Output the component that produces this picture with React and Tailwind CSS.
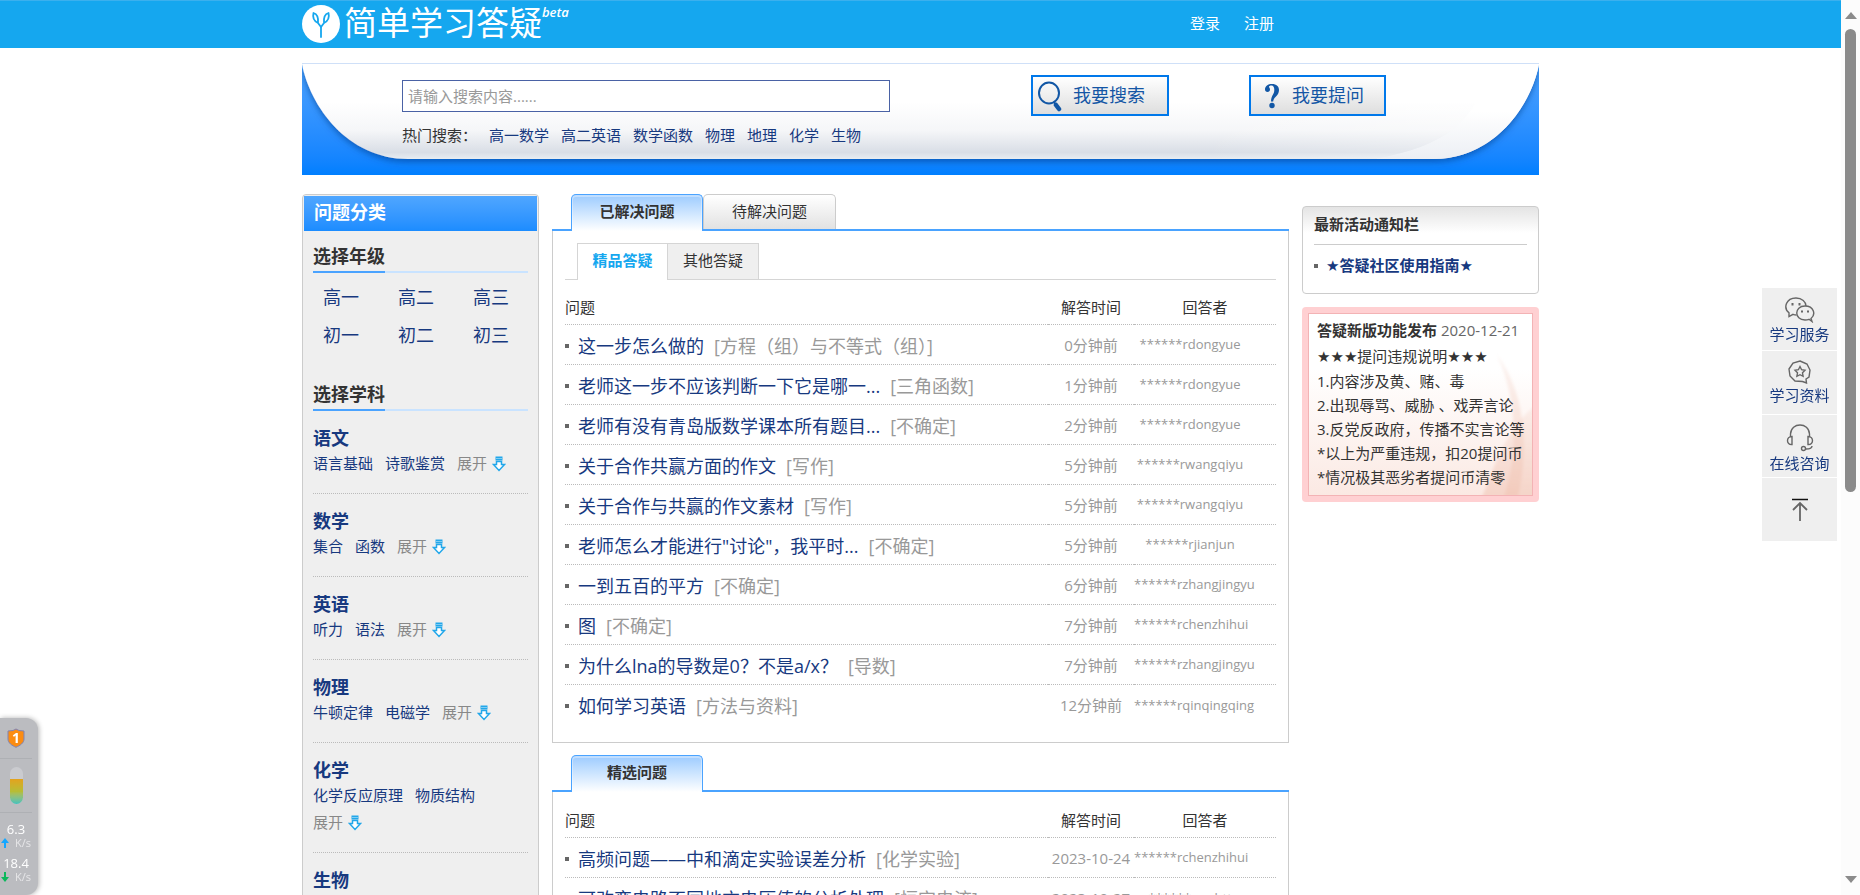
import React from "react";

const solved = [
  ["这一步怎么做的", "方程（组）与不等式（组）", "0分钟前", "******rdongyue"],
  ["老师这一步不应该判断一下它是哪一...", "三角函数", "1分钟前", "******rdongyue"],
  ["老师有没有青岛版数学课本所有题目...", "不确定", "2分钟前", "******rdongyue"],
  ["关于合作共赢方面的作文", "写作", "5分钟前", "******rwangqiyu"],
  ["关于合作与共赢的作文素材", "写作", "5分钟前", "******rwangqiyu"],
  ["老师怎么才能进行\"讨论\"，我平时...", "不确定", "5分钟前", "******rjianjun"],
  ["一到五百的平方", "不确定", "6分钟前", "******rzhangjingyu"],
  ["图", "不确定", "7分钟前", "******rchenzhihui"],
  ["为什么lna的导数是0？不是a/x？", "导数", "7分钟前", "******rzhangjingyu"],
  ["如何学习英语", "方法与资料", "12分钟前", "******rqinqingqing"],
];

const featured = [
  ["高频问题——中和滴定实验误差分析", "化学实验", "2023-10-24", "******rchenzhihui"],
  ["可改变电路不同地方电压值的分析处理", "恒定电流", "2023-10-27", "******rwuhtt"],
];

const subjects = [
  ["语文", ["语言基础", "诗歌鉴赏"]],
  ["数学", ["集合", "函数"]],
  ["英语", ["听力", "语法"]],
  ["物理", ["牛顿定律", "电磁学"]],
  ["化学", ["化学反应原理", "物质结构"]],
  ["生物", []],
];

function Logo() {
  return (
    <h1 className="flex items-start text-white">
      <svg viewBox="0 0 38 38" className="mt-1 size-[38px]" aria-hidden="true">
        <circle cx="19" cy="19" r="19" fill="#fff" />
        <g fill="none" stroke="#15a7ef" strokeWidth="1.8" strokeLinecap="round" strokeLinejoin="round">
          <path d="M19 32V22L16 18C12 16 10.500 12 11.500 8C15 9 16.500 13 16 18" />
          <path d="M19 22L22 18C21.500 13 23 9 26.500 8C27.500 12 26 16 22 18" />
        </g>
      </svg>
      <span className="ml-1 text-[33px] leading-[44px] font-normal">简单学习答疑</span>
      <i className="mt-[3px] text-[13px] leading-4 font-semibold">beta</i>
    </h1>
  );
}

function DownArrow() {
  return (
    <svg viewBox="0 0 14 16" className="ml-[5px] h-4 w-[14px]" aria-hidden="true">
      <path d="M3.500 0.500h7v4h-7z" fill="#22a7ea" />
      <path d="M4 2.500h6" stroke="#7fcdf3" />
      <path d="M4.500 5.500v3H1.500L7 14.500 12.500 8.500H9.500v-3z" fill="#fff" stroke="#22a7ea" strokeWidth="1.500" />
    </svg>
  );
}

function Stars({ children }) {
  return <span className="font-['DejaVu_Sans',sans-serif]">{children}</span>;
}

function SectionTitle({ children }) {
  return (
    <h3 className="flex border-b-2 border-[#c9e3ff]">
      <span className="-mb-0.5 border-b-2 border-[#4aa3ff] text-[18px] leading-[30px] font-bold">{children}</span>
    </h3>
  );
}

function Sidebar() {
  return (
    <aside className="w-[237px] shrink-0 rounded-t-sm border border-[#ccc] bg-[#efefef]">
      <h2 className="m-px h-[35px] bg-gradient-to-b from-[#4fa6ff] to-[#1b8cff] pl-[10px] text-[18px] leading-[32px] font-bold text-white">问题分类</h2>
      <div className="px-[10px] pt-[9px]">
        <SectionTitle>选择年级</SectionTitle>
        <ul className="-mr-[10px] flex flex-wrap pt-[5px] pb-[25px] text-[18px] leading-[38px] text-[#17397f]">
          {["高一", "高二", "高三", "初一", "初二", "初三"].map((g) => (
            <li key={g} className="w-[75px] pl-[10px]"><a href="#">{g}</a></li>
          ))}
        </ul>
        <SectionTitle>选择学科</SectionTitle>
        {subjects.map(([name, links]) => (
          <section key={name} className="mt-[15px] border-b border-dotted border-[#bbb] pb-4">
            <h4 className="text-[18px] leading-6 font-bold text-[#17397f]"><a href="#">{name}</a></h4>
            <div className="flex min-h-[27px] flex-wrap gap-x-3 text-[15px] leading-[27px] text-[#17397f]">
              {links.map((l) => <a key={l} href="#">{l}</a>)}
              {links.length > 0 && <button type="button" className="flex items-center text-[#888]">展开<DownArrow /></button>}
            </div>
          </section>
        ))}
      </div>
    </aside>
  );
}

function QuestionTable({ rows }) {
  return (
    <table className="w-full table-fixed border-collapse">
      <thead>
        <tr className="h-[33px] border-b border-dotted border-[#bbb] text-[15px]">
          <th className="text-left font-normal">问题</th>
          <th className="w-[86px] text-center font-normal">解答时间</th>
          <th className="w-[142px] text-center font-normal">回答者</th>
        </tr>
      </thead>
      <tbody>
        {rows.map(([q, tag, time, who], i) => (
          <tr key={q} className={i === rows.length - 1 ? "h-10" : "h-10 border-b border-dotted border-[#bbb]"}>
            <td className="pt-1 text-[18px]">
              <div className="flex items-center whitespace-nowrap">
                <span className="mr-[9px] size-1 bg-[#666]" />
                <a href="#" className="text-[#17397f]">{q}</a>
                <span className="ml-[10px] text-[#999]">[{tag}]</span>
              </div>
            </td>
            <td className="pt-0.5 text-center text-[15px] whitespace-nowrap text-[#999]">{time}</td>
            <td className="pt-0.5 text-left text-[13px] whitespace-nowrap text-[#999]">
              <span className="inline-block min-w-[112px] text-center">{who}</span>
            </td>
          </tr>
        ))}
      </tbody>
    </table>
  );
}

function ActiveTab({ children }) {
  return (
    <button type="button" className="-mb-0.5 h-[37px] w-[132px] rounded-t-[5px] border border-b-0 border-[#4aa3ff] bg-gradient-to-b from-[#9ccbff] to-white pb-1 text-[15px] font-bold shadow-[inset_0_1px_0_1px_rgba(255,255,255,0.35)]">{children}</button>
  );
}

function Main() {
  return (
    <main className="min-w-0 flex-1">
      <div className="flex border-b-2 border-[#4aa3ff] pl-[19px]">
        <ActiveTab>已解决问题</ActiveTab>
        <button type="button" className="h-[35px] w-[133px] rounded-t-[5px] border border-b-0 border-[#ccc] bg-gradient-to-b from-white to-[#e2e2e2] pb-0.5 text-[15px]">待解决问题</button>
      </div>
      <div className="border border-t-0 border-[#ccc] px-3 pt-3 pb-[18px]">
        <div className="flex border-b border-[#d5d5d5] pl-3 text-[15px]">
          <button type="button" className="-mb-px h-[37px] w-[90px] border border-r-0 border-b-0 border-[#d5d5d5] bg-white pb-[3px] font-bold text-[#15a7ef]">精品答疑</button>
          <button type="button" className="h-9 w-[92px] border border-b-0 border-[#d5d5d5] bg-[#efefef] pb-0.5">其他答疑</button>
        </div>
        <div className="pt-[11px]"><QuestionTable rows={solved} /></div>
      </div>
      <div className="mt-3 flex border-b-2 border-[#4aa3ff] pl-[19px]">
        <ActiveTab>精选问题</ActiveTab>
      </div>
      <div className="border border-t-0 border-[#ccc] px-3 pt-3">
        <QuestionTable rows={featured} />
      </div>
    </main>
  );
}

function Notices() {
  return (
    <aside className="mt-3 w-[237px] shrink-0">
      <section className="h-[88px] rounded border border-[#ccc] bg-gradient-to-b from-[#e4e4e4] to-white to-30% px-[11px] text-[15px]">
        <h2 className="border-b border-[#ccc] pb-0.5 leading-[35px] font-bold">最新活动通知栏</h2>
        <div className="flex items-center pt-2">
          <span className="mr-2 size-1 bg-[#666]" />
          <a href="#" className="leading-6 font-bold text-[#17397f]"><Stars>★</Stars>答疑社区使用指南<Stars>★</Stars></a>
        </div>
      </section>
      <section className="mt-[13px] rounded-sm bg-[#ffd0d2] p-[6px]">
        <div className="relative overflow-hidden border border-[#f3b3b5] bg-gradient-to-b from-white from-30% to-[#fbe9e3] pt-0.5 pr-0 pb-[6px] pl-2 text-[15px] leading-6 whitespace-nowrap">
          <svg viewBox="0 0 80 150" className="absolute right-0 bottom-0 h-[150px] w-20" aria-hidden="true">
            <defs>
              <linearGradient id="petal" x2="0" y2="1">
                <stop stopColor="#f2cfc2" stopOpacity=".25" />
                <stop offset="1" stopColor="#f0c3b2" stopOpacity=".55" />
              </linearGradient>
              <filter id="soft"><feGaussianBlur stdDeviation="1.500" /></filter>
            </defs>
            <g fill="url(#petal)" filter="url(#soft)">
              <path d="M45 10C72 45 78 100 66 152H52C66 110 66 55 45 10Z" />
              <path d="M84 60C52 85 44 120 30 152H84Z" />
            </g>
          </svg>
          <div className="relative">
            <h2 className="leading-[28px]"><b>答疑新版功能发布</b> <span className="text-[#666]">2020-12-21</span></h2>
            <p><Stars>★★★</Stars>提问违规说明<Stars>★★★</Stars></p>
            <p>1.内容涉及黄、赌、毒</p>
            <p>2.出现辱骂、威胁 、戏弄言论</p>
            <p>3.反党反政府，传播不实言论等</p>
            <p>*以上为严重违规，扣20提问币</p>
            <p>*情况极其恶劣者提问币清零</p>
          </div>
        </div>
      </section>
    </aside>
  );
}

function SearchBanner() {
  return (
    <form className="relative mt-[15px] h-[112px] border-t border-[#cfe0f8] bg-gradient-to-b from-[#4ba3ff] to-[#007fff]" onSubmit={(e) => e.preventDefault()}>
      <svg viewBox="0 0 1237 111" preserveAspectRatio="none" className="absolute inset-0 h-full w-full" aria-hidden="true">
        <defs>
          <linearGradient id="sheet" x2="0" y2="1">
            <stop offset=".4" stopColor="#fff" />
            <stop offset=".7" stopColor="#f5f6f8" />
            <stop offset=".93" stopColor="#d9dee6" />
            <stop offset="1" stopColor="#e8edf2" />
          </linearGradient>
          <linearGradient id="corner" x2="0" y2="1">
            <stop offset=".5" stopColor="#fff" />
            <stop offset="1" stopColor="#eceff4" />
          </linearGradient>
          <linearGradient id="fade">
            <stop stopColor="#fff" stopOpacity="0" />
            <stop offset="1" stopColor="#fff" stopOpacity=".35" />
          </linearGradient>
          <filter id="shade" x="-5%" y="-10%" width="110%" height="130%">
            <feDropShadow dx="0" dy="3" stdDeviation="3" floodColor="#003f90" floodOpacity=".6" />
          </filter>
        </defs>
        <path d="M0 0C8 42 45 95 106 95H1131C1192 95 1229 42 1237 0Z" fill="url(#sheet)" filter="url(#shade)" />
        <path d="M900 0H1185C1180 55 1140 84 1075 94H900Z" fill="url(#fade)" />
        <path d="M1075 94C1140 84 1180 55 1185 0H1237C1229 42 1192 95 1131 95H1075Z" fill="url(#corner)" />
      </svg>
      <div className="relative flex items-start pt-[11px] pl-[100px]">
        <div className="w-[490px] pt-[5px]">
          <input aria-label="搜索内容" placeholder="请输入搜索内容......" className="block h-[32px] w-[488px] border border-[#4a62a5] bg-white px-[5px] text-[15px] placeholder:text-[#999]" />
          <p className="mt-[11px] flex text-[15px] leading-6">
            <span className="mr-3">热门搜索：</span>
            <span className="flex gap-3 text-[#17397f]">
              {["高一数学", "高二英语", "数学函数", "物理", "地理", "化学", "生物"].map((t) => <a key={t} href="#">{t}</a>)}
            </span>
          </p>
        </div>
        <button type="submit" className="ml-[139px] flex h-[41px] w-[138px] items-center border-2 border-[#0078ea] bg-gradient-to-b from-white to-[#dedede] pl-[5px] text-[18px] text-[#1456a5]">
          <svg viewBox="0 0 24 32" className="mr-[11px] h-8 w-6" fill="none" stroke="#1257a5" aria-hidden="true">
            <ellipse cx="11" cy="13" rx="10" ry="10.500" strokeWidth="2" />
            <path d="M16 22l2 3" strokeWidth="2" />
            <path d="M18 25l3 4" strokeWidth="4.500" strokeLinecap="round" />
          </svg>
          我要搜索
        </button>
        <button type="button" className="ml-20 flex h-[41px] w-[137px] items-center border-2 border-[#0078ea] bg-gradient-to-b from-white to-[#dedede] pl-[13px] text-[18px] text-[#1456a5]">
          <svg viewBox="0 0 16 26" className="mr-3 h-[26px] w-4" fill="#1257a5" aria-hidden="true">
            <path d="M1 6.500C1 3 4 1 8 1c4.500 0 7 2.500 7 6 0 3-1.500 5-3.500 7-1.500 1.500-2.200 2.800-2.300 4.500H7c0-3 .8-5 2-7 1-1.600 1.300-3 1.300-4.700C10.300 4 9.300 2.400 7.500 2.400 6 2.400 5 3 5 3.700c0 .8 1 1.300 1 2.800C6 8 5 9 3.500 9S1 8 1 6.500z" />
            <circle cx="8" cy="22.500" r="2.700" />
          </svg>
          我要提问
        </button>
      </div>
    </form>
  );
}

function FloatBar() {
  const item = "flex flex-col items-center bg-[#efefef] text-[15px] text-[#17397f]";
  const line = { fill: "none", stroke: "#666", strokeWidth: 1.4, "aria-hidden": true };
  return (
    <nav className="fixed top-[288px] right-[23px] flex w-[75px] flex-col gap-px">
      <a href="#" className={`${item} h-[62px] pt-[9px]`}>
        <svg viewBox="0 0 30 26" className="h-[26px] w-[30px]" {...line}>
          <path d="M11.500 18c-1.500 0-2.500-.3-3.500-.7L4 19.500v-3.700C-2 11 1 1 11 1c6 0 10 4 10 8" />
          <path d="M26 21.500c5-4 3-12.500-6-12.500-11 0-11 14 0 14 2 0 3-.3 4-.7l3 2.200z" fill="#efefef" />
          <path d="M7.500 6v2.500M14.500 6v2.500M17 13.500v2M23 13.500v2" strokeWidth="2" />
        </svg>
        <span className="leading-[22px]">学习服务</span>
      </a>
      <a href="#" className={`${item} h-[63px] pt-[9px]`}>
        <svg viewBox="0 0 24 24" className="size-6" {...line}>
          <path d="M12 1l7 3 3 6-1 7-3 2 .5 4-4-1.500L7 21l-5-5L1 9l4-6z" />
          <path d="M12 6.500l1.600 3.200 3.400.6-2.500 2.500.6 3.500-3.100-1.600-3.100 1.600.6-3.500L7 10.300l3.400-.6z" />
        </svg>
        <span className="leading-[22px]">学习资料</span>
      </a>
      <a href="#" className={`${item} h-[62px] pt-[9px]`}>
        <svg viewBox="0 0 28 28" className="size-7" {...line}>
          <path d="M4.500 13V10C5-2 23-2 23.500 10v3" />
          <path d="M6 12.500v8C0 21 0 12.500 6 12.500zM22 12.500v8c6 .5 6-8 0-8z" />
          <circle cx="17.500" cy="24.500" r="2" /><path d="M20 25c4 0 6-.5 6-3" />
        </svg>
        <span className="leading-[22px]">在线咨询</span>
      </a>
      <button type="button" aria-label="返回顶部" className={`${item} h-[63px] justify-center`}>
        <svg viewBox="0 0 18 24" className="h-6 w-[18px]" {...line}>
          <path d="M1 1.500h16" stroke="#111" strokeWidth="1.500" /><path d="M9 23V5M2 12L9 5l7 7" strokeWidth="1.800" />
        </svg>
      </button>
    </nav>
  );
}

function Speed({ up }) {
  return (
    <svg viewBox="0 0 8 10" className="mr-[6px] h-[10px] w-2" aria-hidden="true">
      {up ? <path d="M4 0l4 5H5v5H3V5H0z" fill="#15a7ff" /> : <path d="M4 10l4-5H5V0H3v5H0z" fill="#0bb85c" />}
    </svg>
  );
}

function SpeedWidget() {
  return (
    <aside className="fixed bottom-0 left-0 flex h-[177px] w-[38px] flex-col items-center rounded-r-xl bg-[#bbbcc0] pr-[6px] text-white shadow-[1px_0_5px_rgba(0,0,0,0.3)]">
      <svg viewBox="0 0 18 20" className="mt-[10px] h-5 w-[18px]" aria-hidden="true">
        <path d="M9 1l3 1.500 5 .5v8c0 4-4 6.500-8 8.300C5 17.500 1 15 1 11V3l5-.5z" fill="#fb8c12" stroke="#7f83b5" />
        <text x="9" y="15" textAnchor="middle" fontSize="14" fontWeight="bold" fill="#fff">1</text>
      </svg>
      <div className="mt-[10px] flex w-full flex-col items-center border-y border-[#aeb0b4] py-2">
        <div className="h-[37px] w-[13px] overflow-hidden rounded-full bg-[#cacbcf] pt-3"><div className="h-[25px] bg-gradient-to-b from-[#e3a21d] via-[#b6bd35] to-[#3dc1bd]" /></div>
      </div>
      <p className="mt-2 text-[13px] leading-4">6.3</p>
      <p className="flex items-center text-[11px] leading-3 text-[#e6e6e8]"><Speed up />K/s</p>
      <p className="mt-[6px] text-[13px] leading-4">18.4</p>
      <p className="flex items-center text-[11px] leading-3 text-[#e6e6e8]"><Speed />K/s</p>
    </aside>
  );
}

function ScrollTrack() {
  return (
    <div className="fixed inset-y-0 right-0 flex w-[19px] flex-col items-center justify-between bg-[#fcfcfc] pt-[11px] pb-[11px]" aria-hidden="true">
      <svg viewBox="0 0 14 8" className="h-2 w-[14px]"><path d="M7 1l6 7H1z" fill="#8b8b8b" /></svg>
      <div className="mt-[10px] mb-auto h-[463px] w-[11px] rounded-full bg-[#8b8b8b]" />
      <svg viewBox="0 0 14 8" className="h-2 w-[14px]"><path d="M7 7l6-7H1z" fill="#8b8b8b" /></svg>
    </div>
  );
}

export default function App() {
  return (
    <div className="h-screen overflow-hidden bg-white pr-[19px] font-['Open_Sans','Noto_Sans_CJK_SC',sans-serif] text-[#333]">
      <header className="border-t border-[#3bb0ee] bg-[#15a7ef]">
        <div className="mx-auto flex h-[47px] max-w-[1237px]">
          <Logo />
          <nav className="mr-[265px] ml-auto flex items-center gap-6 pb-0.5 text-[15px] text-white"><a href="#">登录</a><a href="#">注册</a></nav>
        </div>
      </header>
      <div className="mx-auto max-w-[1237px]">
        <SearchBanner />
        <div className="mt-[19px] flex items-start gap-[13px]">
          <Sidebar /><Main /><Notices />
        </div>
      </div>
      <ScrollTrack />
      <FloatBar />
      <SpeedWidget />
    </div>
  );
}
